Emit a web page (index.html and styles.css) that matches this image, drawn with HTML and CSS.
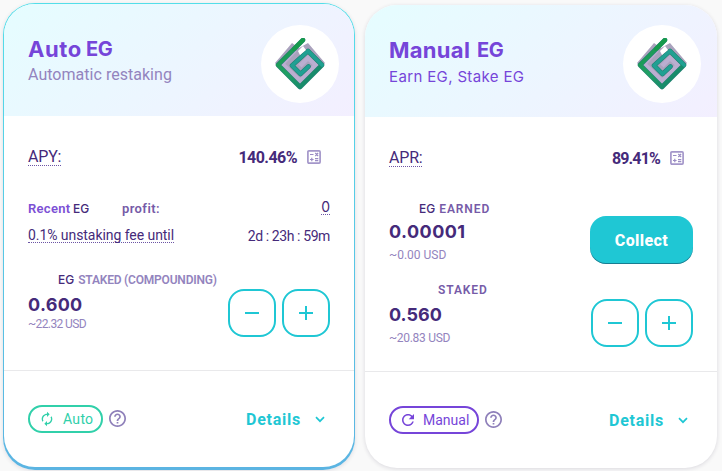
FILE: index.html
```html
<!DOCTYPE html>
<html lang="en">
<head>
<meta charset="utf-8">
<title>Pools</title>
<link rel="stylesheet" href="styles.css">
</head>
<body>
<svg class="defs" width="0" height="0" aria-hidden="true">
  <defs>
    <linearGradient id="green" x1="0" y1="0" x2="1" y2="1"><stop offset="0" stop-color="#159447"/><stop offset=".45" stop-color="#20a064"/><stop offset="1" stop-color="#117c70"/></linearGradient>
    <symbol id="logo" viewBox="0 0 50 52">
      <path d="M0 25 17 5l7 5 9-5 17 20-25 26z" fill="#aaa2bd"/>
      <path d="M20 12 7 26l18 17 16-16-8-7-8 8" fill="none" stroke="#bbaed0" stroke-width="4.500"/>
      <path d="M28 2 3 27l22 22 22-22-14-14-16 14.500 8.500 8.500 8-7.500" fill="none" stroke="#237f72" stroke-width="4.600" stroke-linejoin="round" stroke-linecap="round"/>
      <path d="M28 2 3 27l22 22 22-22-14-14" fill="none" stroke="url(#green)" stroke-width="3.800" stroke-linejoin="round" stroke-linecap="round"/>
      <path d="M47 27 33 13 17 27.500l8.500 8.500 8-7.500" fill="none" stroke="#20a093" stroke-width="3.700" stroke-linejoin="round" stroke-linecap="round"/>
      <path d="m28 8-5 5 2 4 6-5z" fill="#fff"/>
      <path d="M28 2 19 11" fill="none" stroke="#169a4c" stroke-width="4" stroke-linecap="round"/>
    </symbol>
    <symbol id="calc" viewBox="0 0 14 14">
      <rect x=".9" y=".9" width="12.200" height="12.200" rx="1" fill="none" stroke="#a497ca" stroke-width="1.700"/>
      <path d="M3 4.500h3.500M8.300 3l2.800 3m0-3L8.300 6M3 9.500h3.600M4.800 7.700v3.600M8 8.700h3.300M8 10.700h3.300" fill="none" stroke="#9a8cc4" stroke-width="1.200"/>
    </symbol>
    <symbol id="help" viewBox="2 2 20 20">
      <path fill="currentColor" d="M11 18h2v-2h-2v2zm1-16C6.480 2 2 6.480 2 12s4.480 10 10 10 10-4.480 10-10S17.520 2 12 2zm0 18c-4.410 0-8-3.590-8-8s3.590-8 8-8 8 3.590 8 8-3.590 8-8 8zm0-14c-2.210 0-4 1.790-4 4h2c0-1.100.9-2 2-2s2 .9 2 2c0 2-3 1.750-3 5h2c0-2.250 3-2.500 3-5 0-2.210-1.790-4-4-4z"/>
    </symbol>
    <symbol id="chevron" viewBox="0 0 10 7"><path d="M1 1.200 5 5.200l4-4" fill="none" stroke="currentColor" stroke-width="1.700"/></symbol>
    <symbol id="sync" viewBox="0 0 24 24"><path fill="currentColor" d="M12 6v3l4-4-4-4v3c-4.420 0-8 3.580-8 8 0 1.570.46 3.030 1.240 4.260L6.700 14.800c-.45-.83-.7-1.790-.7-2.800 0-3.310 2.690-6 6-6zm6.760 1.740L17.300 9.200c.44.84.7 1.790.7 2.800 0 3.310-2.690 6-6 6v-3l-4 4 4 4v-3c4.420 0 8-3.580 8-8 0-1.570-.46-3.030-1.240-4.260z"/></symbol>
    <symbol id="refresh" viewBox="4 4 16 16"><path fill="currentColor" d="M17.650 6.350C16.200 4.900 14.210 4 12 4c-4.420 0-7.990 3.580-7.990 8s3.570 8 7.990 8c3.730 0 6.840-2.550 7.730-6h-2.080c-.82 2.330-3.040 4-5.650 4-3.310 0-6-2.690-6-6s2.690-6 6-6c1.660 0 3.140.69 4.220 1.780L13 11h7V4l-2.350 2.350z"/></symbol>
    <symbol id="minus" viewBox="0 0 14 14"><path d="M0 7h14" stroke="currentColor" stroke-width="2"/></symbol>
    <symbol id="plus" viewBox="0 0 14 14"><path d="M0 7h14M7 0v14" stroke="currentColor" stroke-width="2"/></symbol>
  </defs>
</svg>
<main class="pools">
  <div class="frame">
    <article class="card auto">
      <header class="head">
        <div class="titles">
          <h2><span class="t-auto">Auto</span><span class="t-eg">EG</span></h2>
          <p class="sub">Automatic restaking</p>
        </div>
        <div class="token"><svg width="50" height="52"><use href="#logo"/></svg></div>
      </header>
      <section class="body">
        <div class="row rate"><span class="rate-label dotted">APY:</span><span class="rate-value">140.46%</span><svg width="14" height="14"><use href="#calc"/></svg></div>
        <div class="row profit"><span class="recent">Recent</span><span class="eg">EG</span><span class="profit-word">profit:</span><span class="zero dotted">0</span></div>
        <div class="row fee"><span class="fee-label dotted">0.1% unstaking fee until</span><span class="timer">2d : 23h : 59m</span></div>
        <div class="row stake">
          <div class="amount">
            <div class="caption"><span class="eg">EG</span><span class="compounding">STAKED (COMPOUNDING)</span></div>
            <div class="number">0.600</div>
            <div class="usd">~22.32 USD</div>
          </div>
          <div class="buttons"><button class="step"><svg width="14" height="14"><use href="#minus"/></svg></button><button class="step"><svg width="14" height="14"><use href="#plus"/></svg></button></div>
        </div>
      </section>
      <footer class="foot">
        <span class="tag tag-auto"><svg width="16" height="16"><use href="#sync"/></svg><span>Auto</span></span>
        <svg class="help" width="17" height="17"><use href="#help"/></svg>
        <span class="details">Details</span><svg class="chev" width="10" height="7"><use href="#chevron"/></svg>
      </footer>
    </article>
  </div>
  <article class="card manual">
    <header class="head">
      <div class="titles">
        <h2><span class="t-manual">Manual</span><span class="t-eg">EG</span></h2>
        <p class="sub sub-manual">Earn EG, Stake EG</p>
      </div>
      <div class="token"><svg width="50" height="52"><use href="#logo"/></svg></div>
    </header>
    <section class="body">
      <div class="row rate"><span class="rate-label dotted">APR:</span><span class="rate-value rate-apr">89.41%</span><svg width="14" height="14"><use href="#calc"/></svg></div>
      <div class="row earned">
        <div class="amount">
          <div class="caption"><span class="eg">EG</span><span class="strong">EARNED</span></div>
          <div class="number">0.00001</div>
          <div class="usd">~0.00 USD</div>
        </div>
        <button class="collect">Collect</button>
      </div>
      <div class="row stake">
        <div class="amount">
          <div class="caption only"><span class="strong">STAKED</span></div>
          <div class="number">0.560</div>
          <div class="usd">~20.83 USD</div>
        </div>
        <div class="buttons"><button class="step"><svg width="14" height="14"><use href="#minus"/></svg></button><button class="step"><svg width="14" height="14"><use href="#plus"/></svg></button></div>
      </div>
    </section>
    <footer class="foot">
      <span class="tag tag-manual"><svg width="12" height="12"><use href="#refresh"/></svg><span>Manual</span></span>
      <svg class="help" width="17" height="17"><use href="#help"/></svg>
      <span class="details">Details</span><svg class="chev" width="10" height="7"><use href="#chevron"/></svg>
    </footer>
  </article>
</main>
</body>
</html>
```
FILE: styles.css
```css
* { box-sizing: border-box; }
body { margin: 0; height: 471px; overflow: hidden; background: #f9f9f9; color: #452a7a; font-family: Roboto, sans-serif; }
.defs { display: block; height: 0; }
svg { display: block; flex: none; }
h2, p { margin: 0; }
button { font: inherit; padding: 0; }
.pools { display: flex; align-items: flex-start; gap: 10px; padding: 3px 0 0 3px; }
.frame { width: 352px; padding: 1px 1px 3px; border-radius: 32px; background: linear-gradient(180deg, #53dee9, #5bb4e2); box-shadow: 0 1px 4px rgba(30, 20, 60, .12); }
.card { background: #fff; border-radius: 31px; overflow: hidden; }
.auto { height: 463px; }
.manual { width: 352px; height: 463px; margin-top: 2px; border-radius: 32px; box-shadow: 0 1px 4px rgba(30, 20, 60, .14); }
.head { height: 112px; display: flex; justify-content: space-between; padding: 21px 15px 0 24px; background: linear-gradient(139.73deg, #e5fdff 0%, #f3efff 100%); }
.manual .head { padding: 20px 16px 0 24px; }
.titles { padding-top: 11px; }
.manual .titles { padding-top: 12px; }
h2 { display: flex; height: 26px; font: 700 22px/26px Inter, sans-serif; color: #7645d9; }
.t-auto { width: 58px; letter-spacing: .6px; }
.t-manual { width: 88px; letter-spacing: .3px; }
.t-eg { font-weight: 700; font-size: 20px; letter-spacing: -.5px; }
.sub { margin-top: 1px; font-size: 16px; line-height: 24px; color: #9384be; letter-spacing: .03px; }
.sub-manual { font: 400 15px/26px Inter, sans-serif; color: #7645d9; letter-spacing: .36px; }
.token { width: 78px; height: 78px; border-radius: 50%; background: #fff; display: flex; align-items: center; justify-content: center; }
.body { height: 254px; padding: 29px 24px 0; }
.row { display: flex; align-items: center; }
.dotted { border-bottom: 1px dotted #6c55a5; }
.rate { height: 24px; padding-right: 9px; }
.rate-label { font-size: 16px; line-height: 17px; letter-spacing: -.2px; }
.rate-value { margin-left: auto; margin-right: 10px; font-weight: 700; font-size: 16px; letter-spacing: -.55px; }
.rate-apr { letter-spacing: -.85px; }
.profit { height: 24px; margin-top: 27px; font-size: 13px; }
.recent { width: 45px; font-weight: 600; color: #7c50d5; letter-spacing: .3px; }
.eg { font: 500 12px/16px Inter, sans-serif; }
.profit .eg { width: 49px; padding-top: 2px; }
.profit-word { font-weight: 600; color: #765ba8; letter-spacing: .4px; }
.zero { margin-left: auto; margin-top: -2px; font: 400 14px/14px Inter, sans-serif; }
.fee { height: 24px; margin-top: 4px; font-size: 14px; }
.fee-label { line-height: 14px; margin-top: -1px; letter-spacing: -.06px; }
.timer { margin-left: auto; margin-top: -1px; letter-spacing: -.4px; }
.stake { justify-content: space-between; align-items: flex-start; }
.auto .stake { height: 62px; margin-top: 24px; }
.caption { height: 16px; display: flex; align-items: center; padding-left: 30px; }
.compounding { margin-left: 4px; font-size: 12px; font-weight: 600; color: #9384be; letter-spacing: -.2px; }
.number { font: 700 18px/26px Inter, sans-serif; margin-top: 4px; letter-spacing: .3px; }
.usd { font-size: 12px; line-height: 14px; color: #9384be; letter-spacing: -.6px; }
.auto .usd { margin-top: -1px; }
.buttons { display: flex; gap: 6px; }
.auto .buttons { margin-top: 17px; }
.step { width: 48px; height: 48px; border: 2px solid #1fc7d4; border-radius: 16px; background: #fff; color: #1fc7d4; display: flex; align-items: center; justify-content: center; }
.foot { height: 97px; border-top: 1px solid #e9e9eb; display: flex; align-items: center; padding: 0 29px 1px 24px; }
.tag { height: 28px; border: 2px solid; border-radius: 14px; display: flex; align-items: center; font-size: 14px; }
.tag-auto { width: 75px; padding-left: 9px; gap: 8px; color: #31d0aa; letter-spacing: .3px; }
.tag-manual { width: 90px; padding-left: 11px; gap: 9px; color: #7645d9; }
.help { margin-left: 6px; color: #8f80ba; }
.details { margin-left: auto; margin-right: 14px; padding-top: 1px; color: #1fc7d4; font-size: 16px; font-weight: 700; letter-spacing: .75px; }
.chev { margin-top: 2px; color: #1fc7d4; }
.earned { margin-top: 31px; height: 64px; justify-content: space-between; align-items: flex-start; }
.earned .number { margin-top: 2px; letter-spacing: .45px; }
.earned .usd { margin-top: 3px; letter-spacing: 0; }
.strong { margin-left: 4px; font-size: 12px; font-weight: 600; color: #765ba8; letter-spacing: .9px; }
.collect { width: 103px; height: 48px; margin-top: 15px; border: 0; border-radius: 16px; background: #1fc7d4; color: #fff; font-weight: 800; font-size: 16px; letter-spacing: .4px; box-shadow: inset 0 -1px 0 rgba(14, 14, 44, .4); }
.manual .stake { margin-top: 17px; }
.manual .stake .number { letter-spacing: 0; }
.manual .stake .buttons { margin-top: 17px; }
.manual .only { padding-left: 45px; }
.manual .stake .usd { margin-top: 3px; letter-spacing: -.3px; }
```
